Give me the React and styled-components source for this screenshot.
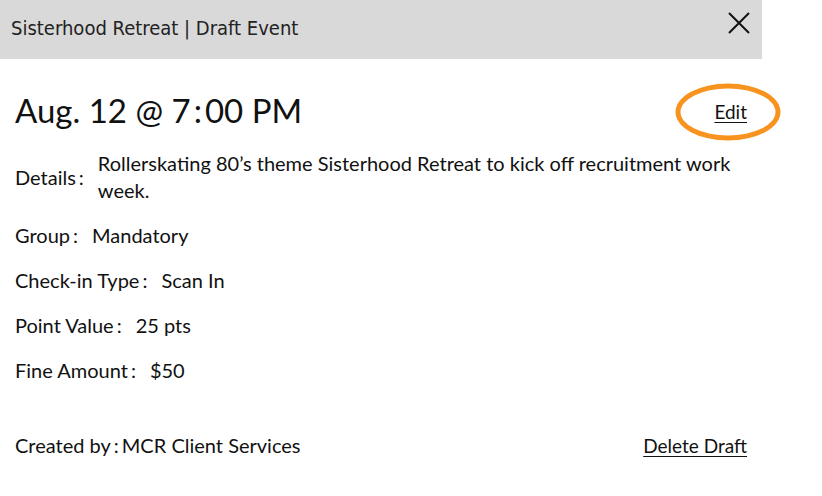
import styled, { createGlobalStyle } from "styled-components";

const GlobalStyle = createGlobalStyle`
  body {
    margin: 0;
    background: #fff;
    font-family: Lato, "Noto Sans", sans-serif;
    color: #111;
  }
`;

const Panel = styled.div`
  width: 762px;
`;

const Header = styled.header`
  height: 59px;
  background: #d9d9d9;
  display: flex;
  align-items: center;
  justify-content: space-between;
  padding: 0 12px 0 11px;
  box-sizing: border-box;
`;

const HeaderTitle = styled.h2`
  margin: 0;
  font-family: "Liberation Sans Narrow", "DejaVu Sans Condensed", "Roboto Condensed", sans-serif;
  font-weight: normal;
  font-size: 20px;
  color: #222;
  padding-bottom: 3px;
`;

const CloseButton = styled.button`
  border: 0;
  background: none;
  padding: 0;
  width: 22px;
  height: 22px;
  margin-bottom: 14px;
  cursor: pointer;
`;

const Body = styled.div`
  padding: 0 15px;
`;

const TitleRow = styled.div`
  display: flex;
  justify-content: space-between;
  align-items: center;
  margin-top: 33px;
`;

const EventTime = styled.h1`
  margin: 0;
  font-weight: normal;
  font-size: 33px;
  line-height: 36px;
`;

const Colon = styled.span`
  margin: 0 ${(p) => p.$after ?? 0}px 0 ${(p) => p.$before ?? 3}px;
`;

const EditWrap = styled.div`
  position: relative;
  margin-top: 2px;
`;

const Circle = styled.span`
  position: absolute;
  left: calc(50% - 3px);
  top: calc(50% + 1px);
  transform: translate(-50%, -50%);
  width: 105px;
  height: 57px;
  box-sizing: border-box;
  border: 5.5px solid #f7931e;
  border-radius: 50%;
  pointer-events: none;
`;

const Link = styled.a`
  display: block;
  color: #111;
  text-decoration: underline;
  text-underline-offset: 3px;
  text-decoration-thickness: 1px;
  font-size: 19px;
  line-height: 27px;
  cursor: pointer;
`;

const Fields = styled.div`
  display: flex;
  flex-direction: column;
  gap: 18px;
  margin-top: 22px;
`;

const Row = styled.div`
  display: flex;
  align-items: center;
  gap: 14px;
  font-size: 20px;
  line-height: 27px;
`;

const Label = styled.span`
  white-space: nowrap;
`;

const Value = styled.span`
  max-width: ${(p) => (p.$wide ? "650px" : "none")};
`;

const Footer = styled.div`
  display: flex;
  justify-content: space-between;
  align-items: center;
  margin-top: 48px;
  font-size: 20px;
  line-height: 27px;
`;

const fields = [
  ["Group", "Mandatory"],
  ["Check-in Type", "Scan In"],
  ["Point Value", "25 pts"],
  ["Fine Amount", "$50"],
];

export default function App() {
  return (
    <Panel>
      <GlobalStyle />
      <Header>
        <HeaderTitle>Sisterhood Retreat | Draft Event</HeaderTitle>
        <CloseButton aria-label="Close">
          <svg width="22" height="22" viewBox="0 0 22 22">
            <path d="M1 1 L21 21 M21 1 L1 21" stroke="#111" strokeWidth="2" fill="none" />
          </svg>
        </CloseButton>
      </Header>
      <Body>
        <TitleRow>
          <EventTime>
            Aug. 12 @ 7<Colon $before={3} $after={3}>:</Colon>00 PM
          </EventTime>
          <EditWrap>
            <Circle />
            <Link>Edit</Link>
          </EditWrap>
        </TitleRow>
        <Fields>
          <Row>
            <Label>
              Details<Colon>:</Colon>
            </Label>
            <Value $wide>
              Rollerskating 80’s theme Sisterhood Retreat to kick off recruitment work week.
            </Value>
          </Row>
          {fields.map(([label, value]) => (
            <Row key={label}>
              <Label>
                {label}
                <Colon>:</Colon>
              </Label>
              <Value>{value}</Value>
            </Row>
          ))}
        </Fields>
        <Footer>
          <span>
            Created by<Colon $after={3}>:</Colon>MCR Client Services
          </span>
          <Link>Delete Draft</Link>
        </Footer>
      </Body>
    </Panel>
  );
}
